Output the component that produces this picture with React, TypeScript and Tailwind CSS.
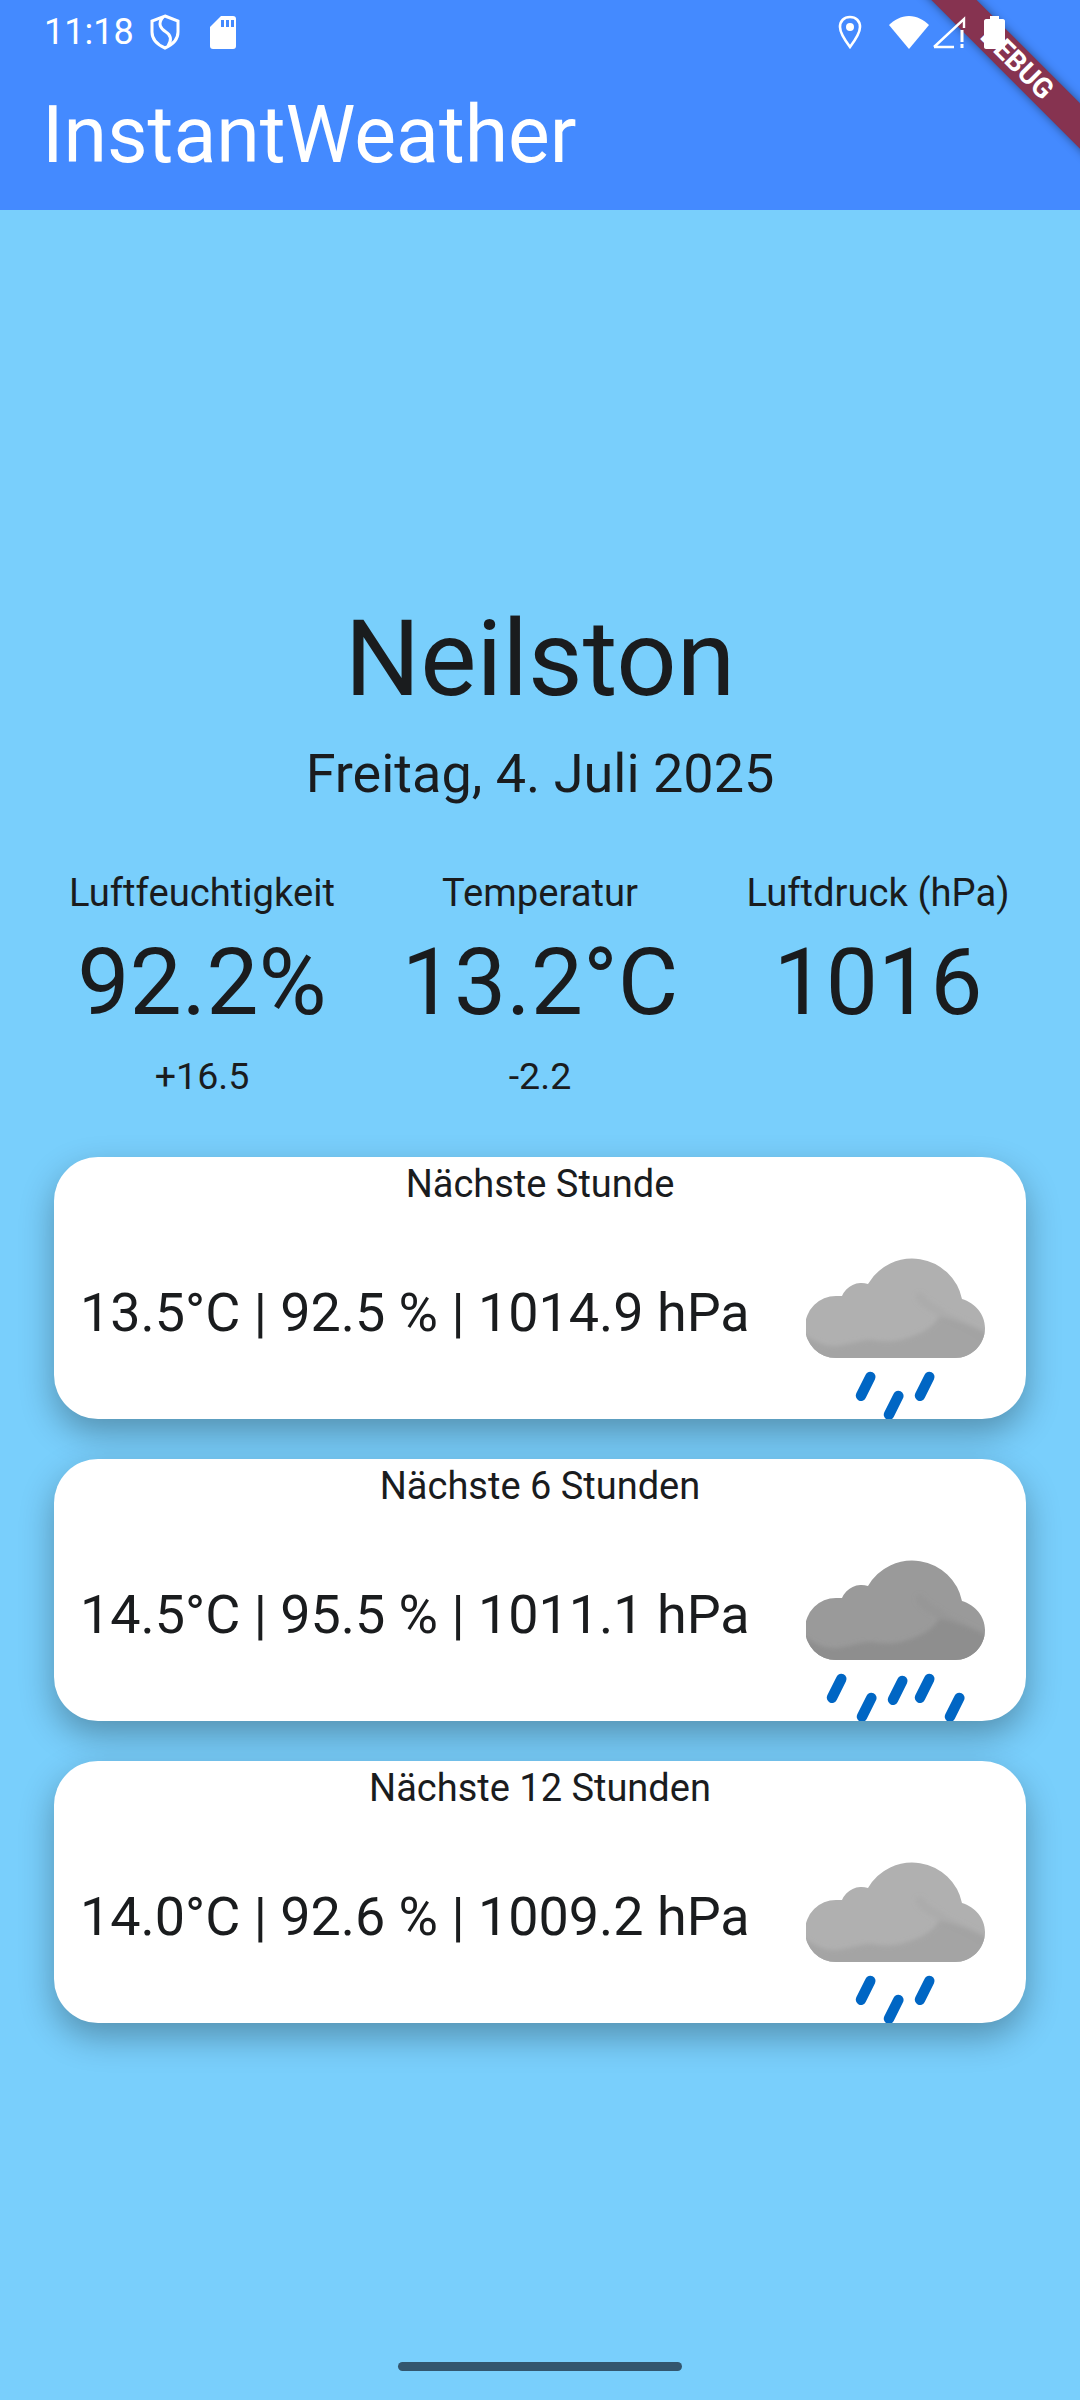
import React, { useId } from 'react';

const font = { fontFamily: 'Roboto, sans-serif' };

const cloudPath = 'M30 101 A31 31 0 0 1 30 39 L36 39 A21 21 0 0 1 62 27 A51 51 0 0 1 156 42 C169 46 179 57 179 71 C179 88 165 101 149 101 Z';

const Cloud: React.FC<{ top: string; bottom: string; drops: [number, number][] }> = ({ top, bottom, drops }) => {
  const id = useId();
  return (
    <svg width="180" height="162" viewBox="0 0 180 162" className="block">
      <defs>
        <clipPath id={`${id}clip`}>
          <path d={cloudPath} />
        </clipPath>
        <filter id={`${id}blur`} x="-20%" y="-20%" width="140%" height="140%">
          <feGaussianBlur stdDeviation="2" />
        </filter>
      </defs>
      <path d={cloudPath} fill={top} />
      <g clipPath={`url(#${id}clip)`}>
        <g filter={`url(#${id}blur)`}>
          <path d="M-4 76 C8 84 18 90 30 89 C42 88 54 83 64 83 C76 84 86 86 98 82 C112 78 126 72 133 60 C150 62 166 70 184 78 L184 106 L-4 106 Z" fill={bottom} />
          <path d="M114 40 C120 50 128 50 134 56 C146 64 160 68 176 78" fill="none" stroke={bottom} strokeOpacity="0.35" strokeWidth="9" strokeLinecap="round" />
        </g>
      </g>
      {drops.map(([x, y], i) => (
        <line key={i} x1={x + 9.3} y1={y} x2={x} y2={y + 18.7} stroke="#0066c4" strokeWidth="10.5" strokeLinecap="round" />
      ))}
    </svg>
  );
};

const threeDrops: [number, number][] = [[55, 120], [83, 139], [114, 120]];
const fiveDrops: [number, number][] = [[26, 120], [56, 139], [87, 122], [114, 120], [144, 139]];

const forecasts = [
  { title: 'Nächste Stunde', text: '13.5°C | 92.5 % | 1014.9 hPa', top: '#b0b0b0', bottom: '#a4a4a4', drops: threeDrops },
  { title: 'Nächste 6 Stunden', text: '14.5°C | 95.5 % | 1011.1 hPa', top: '#9a9a9a', bottom: '#8e8e8e', drops: fiveDrops },
  { title: 'Nächste 12 Stunden', text: '14.0°C | 92.6 % | 1009.2 hPa', top: '#b0b0b0', bottom: '#a4a4a4', drops: threeDrops },
];

const stats = [
  { label: 'Luftfeuchtigkeit', value: '92.2%', diff: '+16.5' },
  { label: 'Temperatur', value: '13.2°C', diff: '-2.2' },
  { label: 'Luftdruck (hPa)', value: '1016', diff: '' },
];

const StatusBar = () => (
  <div className="relative z-10 h-[64px] flex items-center justify-between pl-[44px] pr-[75px] text-white">
    <div className="flex items-center">
      <span className="text-[36px] leading-none font-normal">11:18</span>
      <svg width="30" height="36" viewBox="0 0 30 36" className="ml-[16px]" fill="none" stroke="white" strokeWidth="3">
        <path d="M15 2 L28 7 V18 C28 26 22 31 15 34 C8 31 2 26 2 18 V7 Z" />
        <path d="M13 3 C7 10 11 15 16 18 C21 21 22 26 18 32" />
      </svg>
      <svg width="26" height="33" viewBox="0 0 26 33" className="ml-[30px]" fill="white">
        <path d="M11 0 H23 C25 0 26 1 26 3 V30 C26 32 25 33 23 33 H3 C1 33 0 32 0 30 V11 Z" />
        <rect x="11" y="4" width="3" height="7" fill="#448aff" />
        <rect x="16" y="4" width="3" height="7" fill="#448aff" />
        <rect x="21" y="4" width="3" height="7" fill="#448aff" />
      </svg>
    </div>
    <div className="flex items-center">
      <svg width="24" height="34" viewBox="0 0 24 34" fill="none" stroke="white" strokeWidth="2.6">
        <path d="M12 32 C6 24 2 18 2 12 C2 6 6 2 12 2 C18 2 22 6 22 12 C22 18 18 24 12 32 Z" />
        <circle cx="12" cy="12" r="4" fill="white" stroke="none" />
      </svg>
      <svg width="40" height="33" viewBox="0 0 40 33" className="ml-[27px]" fill="white">
        <path d="M20 33 L0 9 C5 4 12 0 20 0 C28 0 35 4 40 9 Z" />
      </svg>
      <svg width="34" height="33" viewBox="0 0 34 33" className="ml-[3px]" fill="none" stroke="white" strokeWidth="2.4">
        <path d="M2 31 L32 3 V12 M22 31 H2" />
        <path d="M30 14 V26 M30 28 V32" strokeWidth="3" />
      </svg>
      <svg width="21" height="33" viewBox="0 0 21 33" className="ml-[18px]" fill="white">
        <path d="M6 3 V0 H15 V3 H19 C20 3 21 4 21 5 V31 C21 32 20 33 19 33 H2 C1 33 0 32 0 31 V5 C0 4 1 3 2 3 Z" />
      </svg>
    </div>
  </div>
);

export default function App() {
  return (
    <div className="relative w-[1080px] h-[2400px] overflow-hidden bg-[#79cffc] flex flex-col text-[#1a1c1e]" style={font}>
      <div className="relative h-[210px] bg-[#448aff] shrink-0">
        <div className="absolute left-[867px] top-[47px] w-[300px] h-[32px] rotate-45 bg-[#863350] shadow-[0_0_10px_rgba(0,0,0,0.45)] flex items-center justify-center text-white font-bold text-[28px] leading-none">
          DEBUG
        </div>
        <StatusBar />
        <h1 className="relative pl-[42px] mt-[18px] text-[78.8px] leading-[106px] text-white font-normal">InstantWeather</h1>
      </div>

      <div className="flex-1 flex flex-col pt-[383px]">
        <h2 className="text-center text-[106px] leading-[132px] font-normal">Neilston</h2>
        <div className="text-center text-[54px] leading-[60px] mt-[19px]">Freitag, 4. Juli 2025</div>

        <div className="grid grid-cols-3 px-[33px] mt-[67px]">
          {stats.map((s) => (
            <div key={s.label} className="flex flex-col items-center">
              <div className="text-[38.2px] leading-[44px]">{s.label}</div>
              <div className="text-[93px] leading-[112px] mt-[12px]">{s.value}</div>
              <div className="text-[37.6px] leading-[40px] h-[40px] mt-[17px]">{s.diff}</div>
            </div>
          ))}
        </div>

        <div className="flex flex-col gap-[40px] mx-[54px] mt-[61px]">
          {forecasts.map((f) => (
            <div key={f.title} className="bg-white rounded-[44px] h-[262px] shadow-[0_14px_34px_rgba(0,0,0,0.3)] flex flex-col">
              <div className="text-center text-[38px] leading-[44px] mt-[5px]">{f.title}</div>
              <div className="flex-1 flex items-start justify-between pl-[26px] pr-[40px]">
                <div className="text-[53.9px] leading-[60px] mt-[77px]">{f.text}</div>
                <div className="mt-[51px]">
                  <Cloud top={f.top} bottom={f.bottom} drops={f.drops} />
                </div>
              </div>
            </div>
          ))}
        </div>
      </div>

      <div className="absolute left-[398px] top-[2362px] w-[284px] h-[9px] rounded-full bg-[#33566e]" />
    </div>
  );
}
